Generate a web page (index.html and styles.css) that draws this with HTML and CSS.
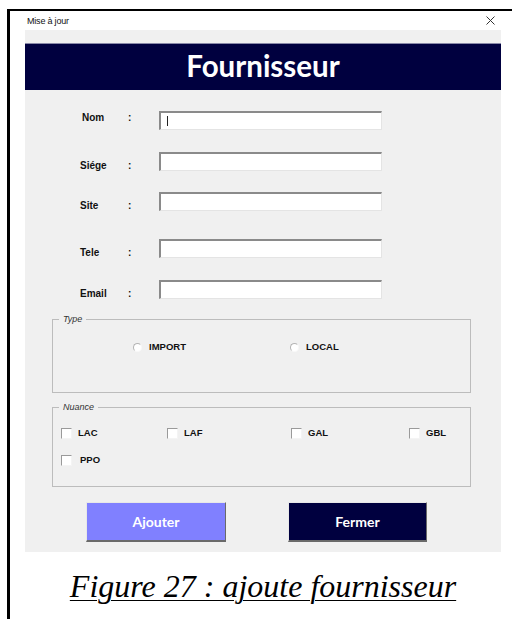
FILE: index.html
```html
<!DOCTYPE html>
<html lang="fr">
<head>
<meta charset="utf-8">
<title>Mise à jour</title>
<link rel="stylesheet" href="styles.css">
</head>
<body>
<div class="sheet">
  <div class="window">
    <div class="titlebar">
      <span class="title">Mise à jour</span>
      <svg class="close" width="9" height="9" viewBox="0 0 9 9"><path d="M0.5 0.5L8.5 8.5M8.5 0.5L0.5 8.5" stroke="#333" stroke-width="1" fill="none"/></svg>
    </div>
    <div class="client">
      <div class="banner">Fournisseur</div>

      <div class="fields">
        <div class="row first">
          <span class="label">Nom</span><span class="colon">:</span>
          <div class="input"><span class="caret"></span></div>
        </div>
        <div class="row r2">
          <span class="label">Siége</span><span class="colon">:</span>
          <div class="input"></div>
        </div>
        <div class="row r3">
          <span class="label">Site</span><span class="colon">:</span>
          <div class="input"></div>
        </div>
        <div class="row r4">
          <span class="label">Tele</span><span class="colon">:</span>
          <div class="input"></div>
        </div>
        <div class="row r5">
          <span class="label">Email</span><span class="colon">:</span>
          <div class="input"></div>
        </div>
      </div>

      <div class="frame type">
        <span class="legend">Type</span>
        <div class="radios">
          <span class="opt"><span class="radio"></span>IMPORT</span>
          <span class="opt"><span class="radio"></span>LOCAL</span>
        </div>
      </div>

      <div class="frame nuance">
        <span class="legend">Nuance</span>
        <div class="checks">
          <span class="opt"><span class="box"></span>LAC</span>
          <span class="opt"><span class="box"></span>LAF</span>
          <span class="opt"><span class="box"></span>GAL</span>
          <span class="opt"><span class="box"></span>GBL</span>
          <span class="opt wide"><span class="box"></span>PPO</span>
        </div>
      </div>

      <div class="buttons">
        <div class="btn add">Ajouter</div>
        <div class="btn close-btn">Fermer</div>
      </div>
    </div>
    <p class="caption">Figure 27 : ajoute fournisseur</p>
  </div>
</div>
</body>
</html>
```
FILE: styles.css
```css
html, body {
  margin: 0;
  padding: 0;
  background: #fff;
}
body {
  width: 512px;
  height: 619px;
  overflow: hidden;
  font-family: "Liberation Sans", Arial, sans-serif;
}
.sheet {
  margin: 9px 0 0 7px;
  border-top: 2px solid #000;
  border-left: 3px solid #000;
  height: 608px;
  padding-left: 15px;
}
.window {
  width: 476px;
}
.titlebar {
  height: 19px;
  display: flex;
  align-items: center;
  justify-content: space-between;
  padding: 0 6px 0 2px;
}
.title {
  font-size: 9px;
  color: #111;
  letter-spacing: -0.2px;
}
.close {
  display: block;
}
.client {
  background: #f0f0f0;
  height: 522px;
  padding-top: 13px;
  box-sizing: border-box;
}
.banner {
  height: 47px;
  background: #00003f;
  border-top: 1px solid #8a8aa8;
  box-sizing: border-box;
  color: #fff;
  font-family: Lato, "Open Sans", sans-serif;
  font-weight: 700;
  font-size: 29.5px;
  text-align: center;
  line-height: 44px;
}
.fields {
  padding: 21px 0 0 0;
}
.row {
  display: flex;
  align-items: flex-start;
  height: 19px;
}
.row + .row { margin-top: 22px; }
.row.r3 { margin-top: 21px; }
.row.r4 { margin-top: 28px; }
.row.r5 { margin-top: 22px; }
.label, .colon {
  font-size: 10px;
  font-weight: 700;
  color: #111;
  line-height: 12px;
}
.label {
  width: 48px;
  padding-left: 55px;
  padding-top: 8px;
}
.first .label { padding-left: 57px; width: 46px; padding-top: 1px; }
.first .colon { padding-top: 1px; }
.colon {
  width: 31px;
  padding-top: 8px;
}
.input {
  width: 223px;
  height: 19px;
  box-sizing: border-box;
  background: #fff;
  border-top: 2px solid #8a8a8a;
  border-left: 2px solid #8a8a8a;
  border-right: 1px solid #e4e4e4;
  border-bottom: 1px solid #e4e4e4;
  position: relative;
}
.caret {
  position: absolute;
  left: 6px;
  top: 3px;
  width: 1px;
  height: 10px;
  background: #222;
}
.frame {
  position: relative;
  margin-left: 27px;
  width: 419px;
  box-sizing: border-box;
  border: 1px solid #bcbcbc;
}
.type {
  margin-top: 20px;
  height: 74px;
}
.nuance {
  margin-top: 14px;
  height: 80px;
}
.legend {
  position: absolute;
  top: -6px;
  left: 6px;
  padding: 0 4px;
  background: #f0f0f0;
  font-size: 9px;
  font-style: italic;
  color: #333;
  line-height: 11px;
}
.opt {
  display: flex;
  align-items: center;
  font-size: 9.5px;
  font-weight: 700;
  color: #111;
  line-height: 12px;
}
.radios {
  display: flex;
  padding: 21px 0 0 80px;
}
.radios .opt:first-child { width: 157px; }
.radio {
  width: 7px;
  height: 7px;
  border-radius: 50%;
  border: 1px solid #b4b4b4;
  border-right-color: #f8f8f8;
  border-bottom-color: #f8f8f8;
  background: #fff;
  margin-right: 7px;
}
.checks {
  display: grid;
  grid-template-columns: 106px 124px 118px auto;
  row-gap: 15px;
  padding: 19px 0 0 8px;
}
.box {
  width: 9px;
  height: 9px;
  border: 1px solid #9a9a9a;
  border-right-color: #f4f4f4;
  border-bottom-color: #f4f4f4;
  background: #fff;
  margin-right: 6px;
}
.checks .opt.wide .box { margin-right: 8px; }
.buttons {
  display: flex;
  margin-top: 15px;
  padding-left: 61px;
  gap: 62px;
}
.btn {
  width: 140px;
  height: 40px;
  box-sizing: border-box;
  border-top: 1px solid #e8e8e8;
  border-left: 1px solid #e8e8e8;
  border-right: 1px solid #6a6a6a;
  border-bottom: 2px solid #6a6a6a;
  color: #fff;
  font-family: Lato, "Open Sans", sans-serif;
  font-weight: 700;
  font-size: 14px;
  display: flex;
  align-items: center;
  justify-content: center;
}
.add { background: #8080ff; }
.close-btn { background: #00003f; width: 139px; }
.caption {
  margin: 16px 0 0 0;
  text-align: center;
  font-family: "Liberation Serif", "Times New Roman", serif;
  font-style: italic;
  font-size: 32px;
  text-decoration: underline;
  text-decoration-thickness: 1px;
  text-underline-offset: 3px;
  color: #000;
  line-height: 36px;
}
```
